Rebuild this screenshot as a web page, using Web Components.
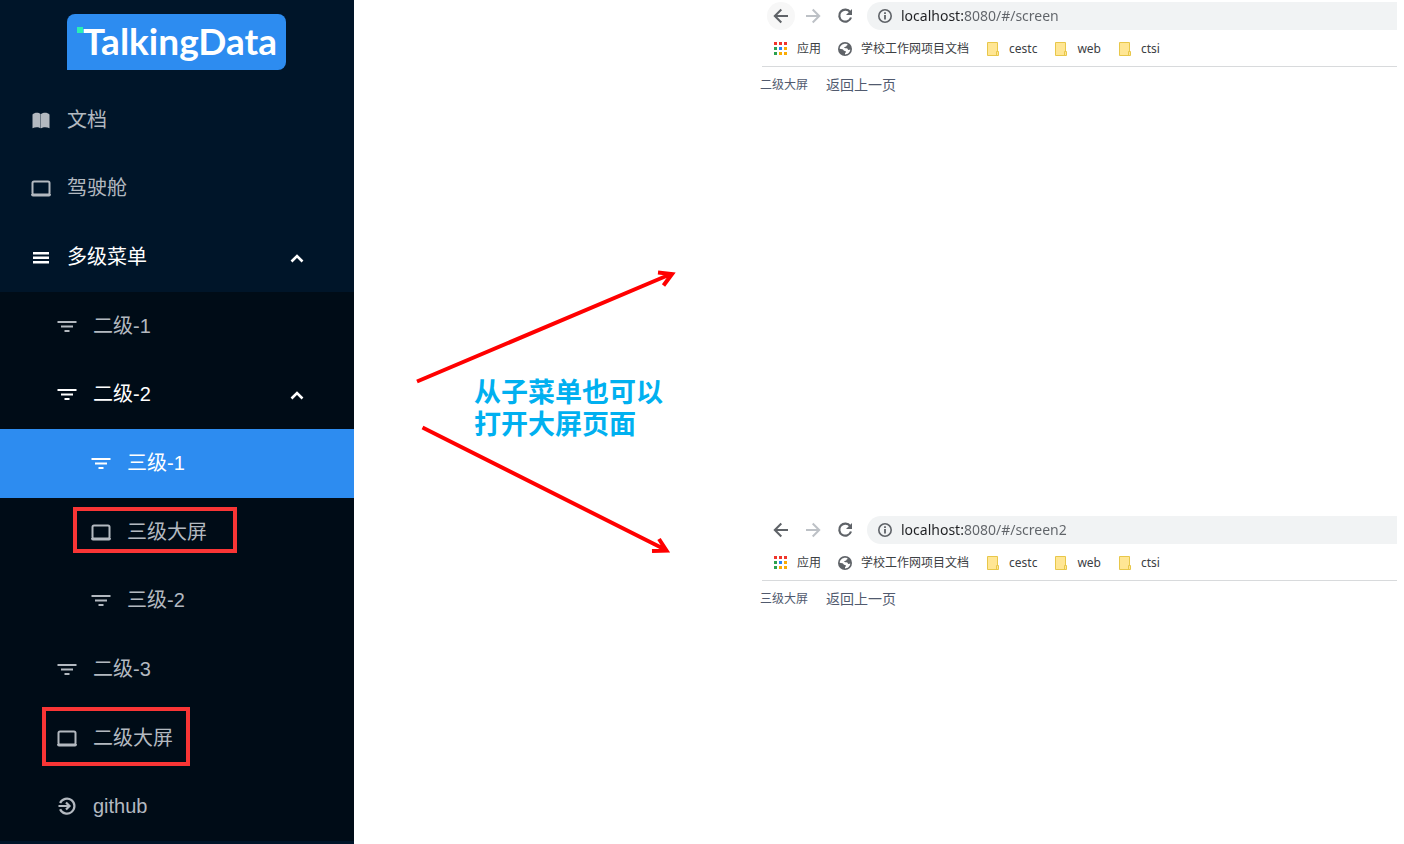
<!DOCTYPE html>
<html lang="zh-CN">
<head>
<meta charset="utf-8">
<title>TalkingData</title>
<style>
  body { margin: 0; background: #fff; font-family: "Liberation Sans", "Noto Sans CJK SC", sans-serif; }
</style>
</head>
<body>
<demo-page></demo-page>

<script>
const define = (name, html, setup) => {
  const template = document.createElement('template');
  template.innerHTML = html;
  customElements.define(name, class extends HTMLElement {
    constructor() {
      super();
      this.attachShadow({ mode: 'open' }).append(template.content.cloneNode(true));
    }
    connectedCallback() { if (setup) setup(this, this.shadowRoot); }
  });
};

const icons = {
  book: '<path fill="currentColor" d="M1.500 4.500C3.500 2.200 7.500 2.200 9.600 4V18.300C8 16.800 4 16.800 1.500 18.200ZM10 4C12.500 2.200 16.500 2.200 18.500 4.500V18.200C16 16.800 12 16.800 10 18.300Z"/>',
  laptop: '<rect x="1.500" y="3.500" width="17" height="13" rx="1.500" fill="none" stroke="currentColor" stroke-width="2"/><path fill="currentColor" d="M0 16H20Q20 18.500 18 18.500H2Q0 18.500 0 16Z"/>',
  menu: '<path fill="currentColor" d="M2 5h16v2.500H2zM2 9.500h16v2.500H2zM2 14h16v2.500H2z"/>',
  filter: '<path fill="currentColor" d="M.500 5h19v2H.500zM4 9.500h12v2H4zM7.500 14h5v2h-5z"/>',
  enter: '<g fill="none" stroke="currentColor" stroke-width="2.200"><path d="M3.100 7A7.500 7.500 0 1 1 3.100 13.200"/><path d="M1.500 10H12M9 6.500L12.500 10L9 13.500"/></g>',
  back: '<path fill="none" stroke="#5f6368" stroke-width="2" d="M17 10H4M10.300 3.500L3.800 10L10.300 16.500"/>',
  forward: '<path fill="none" stroke="#bdc1c6" stroke-width="2" d="M3 10H16M9.700 3.500L16.200 10L9.700 16.500"/>',
  reload: '<path fill="none" stroke="#5f6368" stroke-width="2.200" d="M15.200 6.200A6 6 0 1 0 16 11.500"/><path fill="#5f6368" d="M17 3V9H11Z"/>',
  info: '<circle cx="10" cy="10" r="6.200" fill="none" stroke="#5f6368" stroke-width="1.600"/><path fill="#5f6368" d="M9.100 9h1.800v4.500H9.100zM9.100 6.300h1.800v1.700H9.100z"/>',
  apps: '<path fill="#f0352b" d="M0 0h3v3H0zM5 0h3v3H5zM10 0h3v3h-3z"/><path fill="#2ba14f" d="M0 5h3v3H0zM0 10h3v3H0z"/><path fill="#2684f5" d="M5 5h3v3H5z"/><path fill="#fbac04" d="M10 5h3v3h-3zM5 10h3v3H5zM10 10h3v3h-3z"/>',
  globe: '<circle cx="7" cy="7" r="7" fill="#5f6368"/><path fill="#fff" d="M7.800 1.800C10 2 10 3.200 8.600 3.600C8.600 4.800 7.500 5 6.300 4.900C6 6 7 6.200 8.500 6.300C10 6.500 9.600 7.800 10.500 8L12.300 7.500C12.200 10.500 9.800 12.400 7 12.400V11C8.300 10.600 8.300 9.200 7 9C5.500 8.800 5.500 7.600 4.300 7.300L1.700 6.700C1.800 4 4.500 1.600 7.800 1.800Z"/>',
  folder: '<path fill="#ffe694" stroke="#e8c74a" d="M1.500 .500H11.500V9.500H12.500V13.500H1.500Z"/><path fill="none" stroke="#e8c74a" d="M10.500 13V9.500H12"/>'
};

define('ui-icon', `
  <style>
    :host { display: block; flex: none; width: var(--icon-size, 20px); height: var(--icon-size, 20px); }
    svg { display: block; width: 100%; height: 100%; }
  </style>
  <svg aria-hidden="true"></svg>`, (el, root) => {
  const svg = root.querySelector('svg');
  const box = el.getAttribute('box') || '20';
  svg.setAttribute('viewBox', `0 0 ${box} ${box}`);
  svg.innerHTML = icons[el.getAttribute('name')];
});

define('brand-logo', `
  <style>
    :host { display: block; padding: 14px 0 16px 67px; }
    .plate { position: relative; box-sizing: border-box; width: 219px; height: 56px; padding-left: 16px;
      background: #2d8cf0; color: #fff; border-radius: 8px 8px 8px 0;
      font: 700 37px/54px Lato, sans-serif; white-space: nowrap; }
    .plate::before { content: ""; position: absolute; left: 10px; top: 13px; width: 6px; height: 6px; background: #2af0b4; }
  </style>
  <div class="plate">TalkingData</div>`);

define('menu-item', `
  <style>
    :host { display: flex; position: relative; min-height: 44px; color: #b3b9c0; --indent: 31px; }
    :host([level="2"]) { --indent: 57px; background: #000c17; }
    :host([level="3"]) { --indent: 91px; background: #000c17; }
    :host([open]) { color: #fff; }
    :host([active]) { color: #fff; background: #2d8cf0; }
    a { display: flex; flex: 1; align-items: center; gap: 16px; padding: 0 48px 1px var(--indent);
      color: inherit; text-decoration: none; font-size: 20px; line-height: 28px; }
    .label { flex: 1; }
    .arrow { display: none; width: 18px; height: 18px; }
    :host([open]) .arrow { display: block; }
    .mark { display: none; position: absolute; box-sizing: border-box; border: 4px solid #f93535; pointer-events: none; }
    :host([mark]) .mark { display: block; }
    :host([mark="wide"]) .mark { left: 73px; width: 164px; top: 9px; bottom: 13px; }
    :host([mark="tall"]) .mark { left: 42px; width: 148px; top: 3px; bottom: 6px; }
  </style>
  <a href="#">
    <ui-icon></ui-icon>
    <span class="label"><slot></slot></span>
    <svg class="arrow" viewBox="0 0 18 18" aria-hidden="true"><path fill="none" stroke="currentColor" stroke-width="2.600" d="M3.500 13.500L9 8L14.500 13.500"/></svg>
  </a>
  <span class="mark"></span>`, (el, root) => {
  const old = root.querySelector('ui-icon');
  const icon = document.createElement('ui-icon');
  icon.setAttribute('name', el.getAttribute('icon'));
  old.replaceWith(icon);
});

define('side-menu', `
  <style>
    :host { display: flex; flex-direction: column; box-sizing: border-box; min-height: 100vh; padding-bottom: 3px; background: #001529; }
    nav { flex: 1; display: grid; grid-auto-rows: 1fr; }
  </style>
  <brand-logo></brand-logo>
  <nav><slot></slot></nav>`);

define('flow-note', `
  <style>
    :host { display: grid; align-content: start; justify-content: start; padding: 266px 0 0 58px; }
    svg, p { grid-area: 1 / 1; }
    svg { display: block; width: 268px; height: 290px; }
    p { align-self: center; margin: 0 0 4px 62px; color: #00b0f0;
      font: 700 27px/32px "Liberation Sans", "Noto Sans CJK SC", sans-serif; white-space: nowrap; }
  </style>
  <svg viewBox="0 0 268 290" fill="none" stroke="#f00" stroke-width="4" aria-hidden="true">
    <path d="M5 115.500L259 8M246 6.500L260 8L251.500 19.500"/>
    <path d="M10.500 161.500L254 284M247 273L254.500 284.500L240 285"/>
  </svg>
  <p><slot></slot></p>`);

define('book-mark', `
  <style>
    :host { display: block; }
    a { display: flex; align-items: center; gap: 9px; color: #3c4043; text-decoration: none; white-space: nowrap;
      font: 12px/18px "Noto Sans", "Noto Sans CJK SC", sans-serif; --icon-size: 14px; }
  </style>
  <a href="#"><slot name="icon"></slot><slot></slot></a>`);

define('browser-pane', `
  <style>
    :host { display: block; min-height: 330px; }
    .bar { display: flex; align-items: center; gap: 4px; padding: 2px 0 0 5px; }
    .bar button { display: flex; align-items: center; justify-content: center; width: 28px; height: 28px;
      padding: 0; border: 0; border-radius: 14px; background: none; }
    :host([hover]) .bar button:first-child { background: #f7f7f7; }
    .omnibox { flex: 1; display: flex; align-items: center; gap: 6px; height: 28px; margin-left: 4px; padding-left: 8px;
      background: #f1f3f4; border-radius: 14px 0 0 14px; }
    input { flex: 1; min-width: 0; height: 24px; padding: 0; border: 0; outline: 0;
      color: #5f6368; -webkit-text-fill-color: transparent;
      background: linear-gradient(90deg, #202124 62px, #5f6368 62px); -webkit-background-clip: text; background-clip: text;
      font: 14px/24px "Noto Sans", sans-serif; }
    .marks { display: flex; gap: 17px; height: 35px; padding: 1px 0 0 12px; align-items: center; border-bottom: 1px solid #d8dadc; }
    .page { display: flex; align-items: center; gap: 18px; margin-left: -2px; padding-top: 6px; color: #515a6e;
      font: 12px/22px "Noto Sans CJK SC", sans-serif; }
    .page button { padding: 0; border: 0; background: none; color: inherit; font: 14px/22px "Noto Sans CJK SC", sans-serif; }
  </style>
  <div class="bar">
    <button aria-label="后退"><ui-icon name="back"></ui-icon></button>
    <button aria-label="前进"><ui-icon name="forward"></ui-icon></button>
    <button aria-label="刷新"><ui-icon name="reload"></ui-icon></button>
    <div class="omnibox"><ui-icon name="info"></ui-icon><input type="text" aria-label="地址" spellcheck="false"></div>
  </div>
  <div class="marks">
    <book-mark><ui-icon slot="icon" name="apps" box="14"></ui-icon>应用</book-mark>
    <book-mark><ui-icon slot="icon" name="globe" box="14"></ui-icon>学校工作网项目文档</book-mark>
    <book-mark><ui-icon slot="icon" name="folder" box="14"></ui-icon>cestc</book-mark>
    <book-mark><ui-icon slot="icon" name="folder" box="14"></ui-icon>web</book-mark>
    <book-mark><ui-icon slot="icon" name="folder" box="14"></ui-icon>ctsi</book-mark>
  </div>
  <div class="page"><span><slot></slot></span><button>返回上一页</button></div>`, (el, root) => {
  root.querySelector('input').value = el.getAttribute('url');
});

define('demo-page', `
  <style>
    :host { display: grid; grid-template-columns: 354px 408px minmax(0, 1fr); min-height: 100vh; }
    .panes { display: grid; grid-template-rows: 514px auto; align-content: start; padding-right: 7px; }
  </style>
  <side-menu>
    <menu-item icon="book">文档</menu-item>
    <menu-item icon="laptop">驾驶舱</menu-item>
    <menu-item icon="menu" open>多级菜单</menu-item>
    <menu-item icon="filter" level="2">二级-1</menu-item>
    <menu-item icon="filter" level="2" open>二级-2</menu-item>
    <menu-item icon="filter" level="3" active>三级-1</menu-item>
    <menu-item icon="laptop" level="3" mark="wide">三级大屏</menu-item>
    <menu-item icon="filter" level="3">三级-2</menu-item>
    <menu-item icon="filter" level="2">二级-3</menu-item>
    <menu-item icon="laptop" level="2" mark="tall">二级大屏</menu-item>
    <menu-item icon="enter" level="2">github</menu-item>
  </side-menu>
  <flow-note>从子菜单也可以<br>打开大屏页面</flow-note>
  <main class="panes">
    <browser-pane hover url="localhost:8080/#/screen">二级大屏</browser-pane>
    <browser-pane url="localhost:8080/#/screen2">三级大屏</browser-pane>
  </main>`);
</script>
</body>
</html>
